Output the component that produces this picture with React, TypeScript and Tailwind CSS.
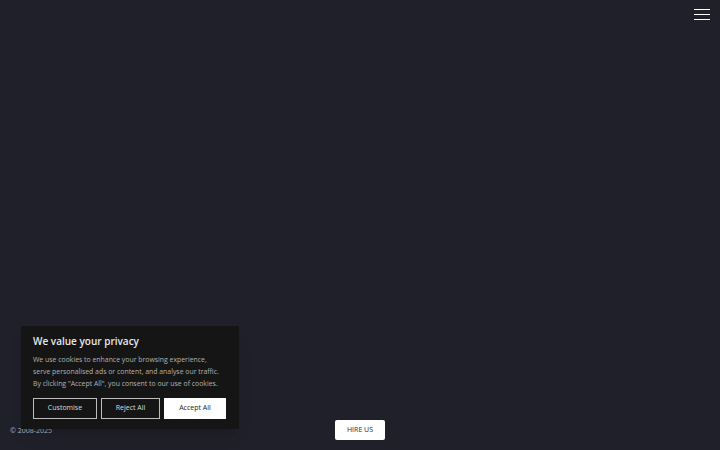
/** Landing shell: empty dark stage, menu toggle, footer and the cookie consent card. */
export default function App() {
  return (
    <div
      className="relative h-[450px] w-[720px] overflow-hidden bg-[#20202a] text-white"
      style={{ fontFamily: '"Open Sans", "Noto Sans", sans-serif' }}
    >
      <header className="flex justify-end px-[10px] pt-[9px]">
        <button aria-label="Menu" className="flex w-[16px] flex-col gap-[4px]">
          <span className="h-px w-full bg-white" />
          <span className="h-px w-full bg-white" />
          <span className="h-px w-full bg-white" />
        </button>
      </header>

      <footer className="absolute inset-x-0 bottom-[10px] flex h-[20px] items-center px-[10px]">
        <span className="pt-[2px] text-[7px] text-[#b8b8c0]">© 2008-2025</span>
        <button className="absolute left-[335px] top-0 h-[20px] w-[50px] rounded-[2px] bg-white text-[7px] text-[#2a2a33]">
          HIRE US
        </button>
      </footer>

      <CookieCard />
    </div>
  )
}

function CookieCard() {
  return (
    <div className="absolute left-[21px] top-[326px] h-[103px] w-[218px] bg-[#151515] px-[12px] pt-[9px] shadow-lg">
      <h2 className="text-[10px] font-semibold leading-[12px] text-[#e8e8e8]">We value your privacy</h2>
      <p className="mt-[7px] whitespace-nowrap text-[6.9px] leading-[12px] text-[#b3b3b3]">
        We use cookies to enhance your browsing experience,
        <br />
        serve personalised ads or content, and analyse our traffic.
        <br />
        By clicking "Accept All", you consent to our use of cookies.
      </p>
      <div className="mt-[8px] flex gap-[4px]">
        <button className="h-[21px] w-[64px] border border-[#bdbdbd] text-[7px] text-[#dcdcdc]">
          Customise
        </button>
        <button className="h-[21px] w-[59px] border border-[#bdbdbd] text-[7px] text-[#dcdcdc]">
          Reject All
        </button>
        <button className="h-[21px] w-[62px] border border-white bg-white text-[7px] text-[#222]">
          Accept All
        </button>
      </div>
    </div>
  )
}
